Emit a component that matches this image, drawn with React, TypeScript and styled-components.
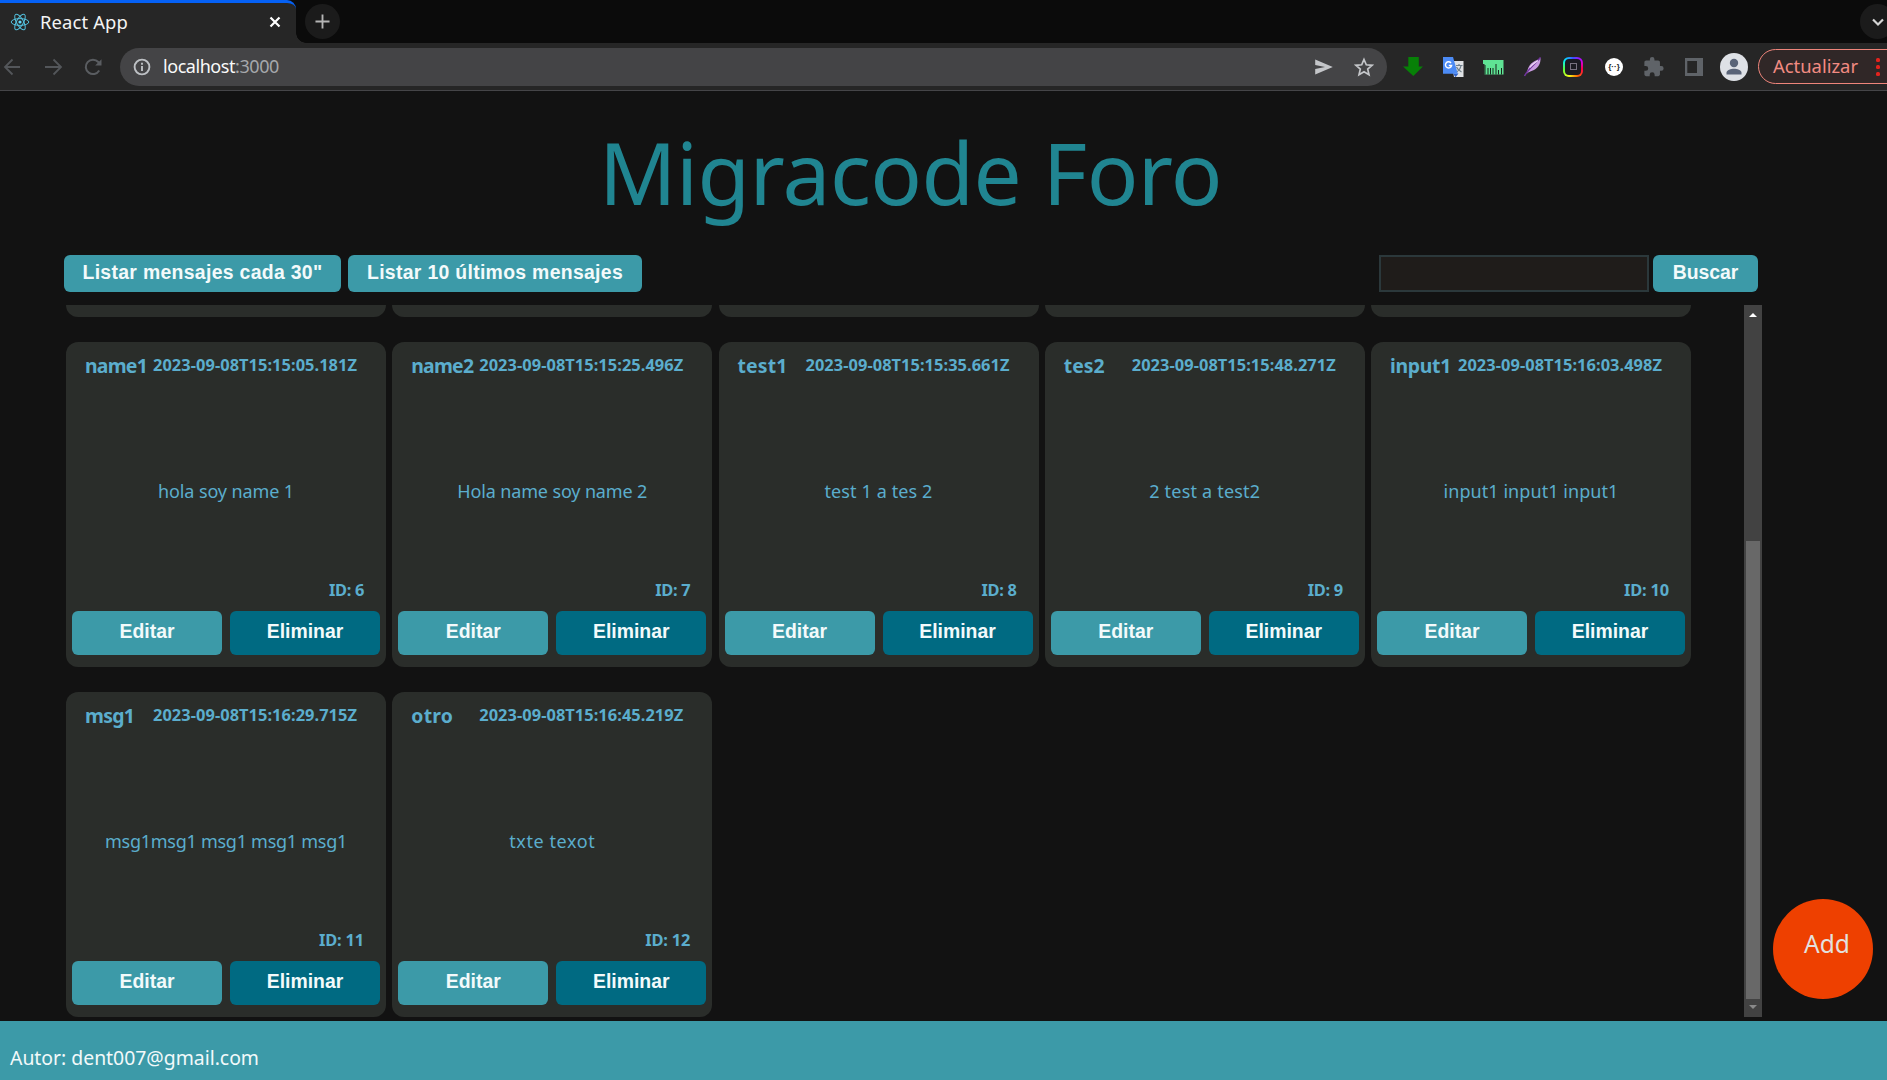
import React, { useLayoutEffect, useRef, useState } from 'react';
import styled, { createGlobalStyle, css } from 'styled-components';

const uiFont = '"Noto Sans", "Open Sans", sans-serif';
const buttonFont = '"Liberation Sans", Arial, sans-serif';

const GlobalStyle = createGlobalStyle`
  *, *::before, *::after { box-sizing: border-box; }
  html, body { margin: 0; background: #121212; overflow: hidden; }
  svg { display: block; flex: none; }
  button, input { margin: 0; font: inherit; }
`;

const Screen = styled.div`
  width: 1887px;
  height: 1080px;
  display: flex;
  flex-direction: column;
  overflow: hidden;
  font-family: ${uiFont};
  background: #121212;
`;

/* Label tracked so that it spans a given width */
const TrackedText = styled.span`
  display: inline-block;
  white-space: pre;
  flex: none;
`;

function Tracked({ text, width }: { text: string; width: number }) {
  const ref = useRef<HTMLSpanElement>(null);
  const [spacing, setSpacing] = useState(0);
  useLayoutEffect(() => {
    if (ref.current) {
      const natural = ref.current.getBoundingClientRect().width;
      setSpacing((width - natural) / text.length);
    }
  }, []);
  return (
    <TrackedText ref={ref} style={{ letterSpacing: `${spacing}px` }}>
      {text}
    </TrackedText>
  );
}

/* Browser chrome */
const TabStrip = styled.div`
  height: 43px;
  flex: none;
  display: flex;
  background: #0b0b0b;
`;

const Tab = styled.div`
  position: relative;
  width: 296px;
  height: 43px;
  display: flex;
  align-items: center;
  padding: 0 13px 3px 10px;
  background: #262626;
  border-top: 3px solid #0561f5;
  border-top-right-radius: 9px;
  color: #f4f4f4;
  font-size: 18.4px;

  &::after {
    content: '';
    position: absolute;
    left: 296px;
    bottom: 0;
    width: 10px;
    height: 10px;
    background: radial-gradient(circle at 100% 0, transparent 9.5px, #262626 10px);
  }
`;

const TabTitle = styled.span`
  flex: 1;
  margin-left: 10px;
  line-height: 24px;
`;

const RoundButton = styled.span<{ $left?: number; $right?: number }>`
  width: 35px;
  height: 35px;
  flex: none;
  margin-top: 4px;
  margin-left: ${p => p.$left ?? 0}px;
  margin-right: ${p => p.$right ?? 0}px;
  border-radius: 50%;
  background: #1b1b1b;
  display: flex;
  align-items: center;
  justify-content: center;
`;

const StripSpace = styled.div`
  flex: 1;
`;

const Toolbar = styled.div`
  height: 48px;
  flex: none;
  display: flex;
  align-items: center;
  background: #262626;
  border-bottom: 1px solid #454548;
`;

const NavButtons = styled.div`
  width: 120px;
  display: flex;
  gap: 16px;
  padding-left: 1px;
  flex: none;
`;

const AddressBar = styled.div`
  width: 1267px;
  height: 38px;
  flex: none;
  display: flex;
  align-items: center;
  padding: 0 13px;
  border-radius: 19px;
  background: #444446;
  color: #fafafa;
  font-size: 18px;
`;

const Address = styled.span`
  flex: 1;
  margin-left: 12px;
  padding-bottom: 1px;
  line-height: 24px;
`;

const Port = styled.span`
  color: #a6a8ac;
`;

const AddressIcons = styled.span`
  display: flex;
  gap: 20px;
`;

const Extensions = styled.div`
  display: flex;
  align-items: center;
  gap: 18px;
  margin-left: 16px;
  flex: none;
`;

const UpdateChip = styled.div`
  width: 150px;
  height: 35px;
  flex: none;
  display: flex;
  align-items: center;
  margin-left: 10px;
  padding-left: 14px;
  border: 1.5px solid #ee857b;
  border-radius: 18px;
  background: #302727;
  color: #f28b82;
  font-size: 18.4px;
  line-height: 24px;
`;

const ChipLabel = styled.span`
  padding-bottom: 2px;
`;

const Dots = styled.span`
  display: grid;
  gap: 3px;
  margin-left: 18px;
  i { width: 4px; height: 4px; border-radius: 1.5px; background: #e4231d; }
`;

/* Forum page */
const Title = styled.h1`
  margin: 0;
  height: 164px;
  flex: none;
  padding: 21px 0 0 599px;
  color: #208591;
  font-size: 85.5px;
  line-height: 120px;
  font-weight: 400;
`;

const Controls = styled.div`
  height: 50px;
  flex: none;
  display: flex;
  align-items: flex-start;
  padding: 0 129px 0 64px;
`;

const tone = { light: '#3c9aa8', deep: '#006a82' };

const Button = styled.button<{ $width: number; $tall?: boolean; $tone?: keyof typeof tone; $left?: number }>`
  width: ${p => p.$width}px;
  height: ${p => (p.$tall ? 44 : 37)}px;
  margin-left: ${p => p.$left ?? 0}px;
  flex: none;
  padding: 0 0 ${p => (p.$tall ? 5 : 4)}px;
  border: 0;
  border-radius: 6px;
  background: ${p => tone[p.$tone ?? 'light']};
  color: #f3fafb;
  font: 700 19.4px/24px ${buttonFont};
  text-align: center;
`;

const SearchInput = styled.input`
  width: 270px;
  height: 37px;
  margin-left: auto;
  margin-right: 4px;
  padding: 0 6px;
  border: 2px solid #2b383b;
  border-radius: 0;
  outline: 0;
  background: #1f1c1a;
  color: #eee;
`;

const Board = styled.div`
  height: 712px;
  flex: none;
  display: flex;
`;

const Viewport = styled.div`
  width: 1744px;
  height: 712px;
  flex: none;
  overflow: hidden;
  display: flex;
  flex-direction: column;
  justify-content: flex-end;
  padding-left: 66px;
`;

const CardGrid = styled.div`
  display: grid;
  grid-template-columns: repeat(5, 320px);
  grid-auto-rows: 325px;
  gap: 25px 6.25px;
  flex: none;
`;

const Card = styled.article`
  height: 325px;
  display: flex;
  flex-direction: column;
  padding: 11px 6px 12px;
  border-radius: 12px;
  background: #2a2d2a;
  color: #5badcd;
`;

const CardHead = styled.header`
  height: 26px;
  display: flex;
  align-items: center;
  padding-left: 13px;
  line-height: 26px;
  font-weight: 700;
`;

const Name = styled.span`
  width: 68px;
  flex: none;
  font-size: 19.4px;
  white-space: nowrap;
`;

const Stamp = styled.time`
  font-size: 16.4px;
  margin-top: -2px;
`;

const Body = styled.p`
  flex: 1;
  margin: 0;
  padding-top: 31px;
  display: flex;
  align-items: center;
  justify-content: center;
  font-size: 18px;
`;

const CardId = styled.div`
  height: 40px;
  padding: 6px 16px 0 0;
  text-align: right;
  font-size: 16.4px;
  line-height: 26px;
  font-weight: 700;
`;

const Actions = styled.div`
  display: flex;
  gap: 8px;
`;

const ScrollTrack = styled.div`
  width: 18px;
  height: 712px;
  flex: none;
  display: flex;
  flex-direction: column;
  align-items: center;
  background: #424242;
`;

const ScrollThumb = styled.div`
  width: 14px;
  height: 458px;
  margin-top: 220px;
  background: #686868;
`;

const ScrollArrow = styled.i<{ $down?: boolean }>`
  width: 0;
  height: 0;
  border: 4px solid transparent;
  border-top-width: 0;
  border-bottom: 4px solid #fff;
  margin-top: 8px;
  margin-bottom: 4px;
  ${p => p.$down && css`
    border-top: 4px solid #8a8a8a;
    border-bottom-width: 0;
    margin-top: 6px;
  `}
`;

const Side = styled.aside`
  flex: 1;
  display: flex;
  align-items: flex-end;
  padding: 0 0 18px 11px;
`;

const AddButton = styled.button`
  width: 100px;
  height: 100px;
  padding: 0 0 10px 8px;
  border: 0;
  border-radius: 50%;
  background: #ee4000;
  color: #e3e0df;
  font: 400 24.5px/32px ${uiFont};
`;

const Footer = styled.footer`
  margin-top: 4px;
  height: 59px;
  flex: none;
  padding: 24px 10px 0;
  background: #3c9aa8;
  color: #f2f9fa;
  font-size: 19.4px;
  line-height: 26px;
`;

type Message = { id: number; name: string; nameW: number; time: string; text: string; textW: number };

const messages: Message[] = [
  { id: 6, name: 'name1', nameW: 62, time: '2023-09-08T15:15:05.181Z', text: 'hola soy name 1', textW: 136 },
  { id: 7, name: 'name2', nameW: 62, time: '2023-09-08T15:15:25.496Z', text: 'Hola name soy name 2', textW: 190 },
  { id: 8, name: 'test1', nameW: 50, time: '2023-09-08T15:15:35.661Z', text: 'test 1 a tes 2', textW: 108 },
  { id: 9, name: 'tes2', nameW: 41, time: '2023-09-08T15:15:48.271Z', text: '2 test a test2', textW: 111 },
  { id: 10, name: 'input1', nameW: 61, time: '2023-09-08T15:16:03.498Z', text: 'input1 input1 input1', textW: 175 },
  { id: 11, name: 'msg1', nameW: 49, time: '2023-09-08T15:16:29.715Z', text: 'msg1msg1 msg1 msg1 msg1', textW: 242 },
  { id: 12, name: 'otro', nameW: 42, time: '2023-09-08T15:16:45.219Z', text: 'txte texot', textW: 86 },
];

const MessageCard = ({ m }: { m: Message }) => (
  <Card>
    <CardHead>
      <Name><Tracked text={m.name} width={m.nameW} /></Name>
      <Stamp><Tracked text={m.time} width={204} /></Stamp>
    </CardHead>
    <Body><Tracked text={m.text} width={m.textW} /></Body>
    <CardId><Tracked text={`ID: ${m.id}`} width={m.id > 9 ? 45 : 35} /></CardId>
    <Actions>
      <Button $width={150} $tall>Editar</Button>
      <Button $width={150} $tall $tone="deep">Eliminar</Button>
    </Actions>
  </Card>
);

const ReactLogo = () => (
  <svg width="20" height="20" viewBox="0 0 20 20" fill="none" stroke="#53c1de" strokeWidth="1">
    <circle cx="10" cy="10" r="1.6" fill="#61dafb" stroke="none" />
    <ellipse cx="10" cy="10" rx="8.8" ry="3.4" />
    <ellipse cx="10" cy="10" rx="8.8" ry="3.4" transform="rotate(60 10 10)" />
    <ellipse cx="10" cy="10" rx="8.8" ry="3.4" transform="rotate(120 10 10)" />
  </svg>
);

const Arrow = ({ flip }: { flip?: boolean }) => (
  <svg width="24" height="24" viewBox="0 0 24 24" fill="none" stroke="#53565a" strokeWidth="1.8">
    <path d={flip ? 'M4 12h15M12.5 4.5 20 12l-7.5 7.5' : 'M19 12H4M11.5 4.5 4 12l7.5 7.5'} />
  </svg>
);

const Reload = () => (
  <svg width="24" height="24" viewBox="0 0 24 24" fill="none" stroke="#5a5d61" strokeWidth="2">
    <path d="M18.200 15.500A7.200 7.200 0 1 1 17.300 7L19 9" />
    <path d="M20.500 4.200v6.300h-6.300z" fill="#5a5d61" stroke="none" />
  </svg>
);

const Info = () => (
  <svg width="18" height="18" viewBox="0 0 18 18" fill="none" stroke="#bdc0c4" strokeWidth="1.9">
    <circle cx="9" cy="9" r="7.4" />
    <path d="M9 8v5M9 4.800v1.900" />
  </svg>
);

const Send = () => (
  <svg width="20" height="20" viewBox="0 0 20 20">
    <path d="M1.200 2.600 18.800 10 1.200 17.400V12L11 10 1.200 8z" fill="#c4c6c9" />
  </svg>
);

const Star = () => (
  <svg width="20" height="20" viewBox="0 0 20 20">
    <path d="m10 2.500 2.300 5.300 5.700.5-4.300 3.800 1.300 5.600-5-3-5 3 1.300-5.600L2 8.300l5.700-.5z" fill="none" stroke="#c4c6c9" strokeWidth="1.7" />
  </svg>
);

const Download = () => (
  <svg width="22" height="22" viewBox="0 0 22 22">
    <path d="M5.300 1h10.500v9.500H20L10.300 20 0 10.500h5.300z" fill="#078007" />
  </svg>
);

const Translate = () => (
  <svg width="22" height="22" viewBox="0 0 22 22">
    <path d="M8 5h12.500v16h-9.500z" fill="#dfe1e4" />
    <path d="M13 9.500h6.500M16 8v1.500M18 9.500c-.5 3-2 5-4.500 6.500M13.500 11c1 2.300 3 4 5 5" stroke="#6f7f8b" strokeWidth="1.2" fill="none" />
    <path d="m10 17.500 5.500 0-3 3.800z" fill="#2f61c9" />
    <path d="M0 1h10l4.800 16.800H0z" fill="#4c8bf5" />
    <path d="M8 7A3.100 3.100 0 1 0 8.600 9.500H5.800" stroke="#fff" strokeWidth="1.4" fill="none" />
  </svg>
);

const Fringe = () => (
  <svg width="22" height="22" viewBox="0 0 22 22">
    <path d="M0 4h20.500v14.500H1.500V8H0z" fill="#5fe394" />
    <path d="M2 9v9.500M5 12v6.500M7.500 12v6.500M10 12v6.500M13 8v10.500M15.500 14v4.500M18.500 12v6.500" stroke="#18241d" strokeWidth="1" fill="none" />
  </svg>
);

const Feather = () => (
  <svg width="22" height="22" viewBox="0 0 22 22">
    <path d="M17.500 1.500c.3 6-2 10-6.500 12.500-2.500 1.300-5 1.500-7 3.500.5-6 3-9.500 7-12 2.500-1.500 5-2 6.500-4z" fill="#c99be0" />
    <path d="M1.500 20C4 14.500 10 10 17.500 1.500" stroke="#70349c" strokeWidth="1.5" fill="none" />
    <path d="M7 11.500c2-3 5-5 8-7" stroke="#f0dcf7" strokeWidth="1.3" fill="none" />
  </svg>
);

const RainbowRing = styled.span`
  width: 20px;
  height: 20px;
  margin: 0 2px 0 0;
  flex: none;
  border-radius: 6px;
  background: conic-gradient(from 0deg, #3a4dff, #c500ff, #ff0048, #ff6a00, #f0ff1c, #5cff3a, #00f0ff, #3a4dff);
  display: flex;
  align-items: center;
  justify-content: center;
`;

const RingCore = styled.span`
  width: 16px;
  height: 16px;
  border-radius: 4px;
  background: #1b1b22;
  display: flex;
  align-items: center;
  justify-content: center;

  &::before {
    content: '';
    width: 7px;
    height: 7px;
    border: 1px solid #77717f;
  }
`;

const JsonBadge = styled.span`
  width: 18px;
  height: 18px;
  margin: 0 2px;
  flex: none;
  border-radius: 50%;
  background: #fff;
  color: #222;
  display: flex;
  align-items: center;
  justify-content: center;
  font: 700 8px/18px ${buttonFont};
`;

const Puzzle = () => (
  <svg width="22" height="22" viewBox="0 0 24 24">
    <path fill="#5f6368" d="M20 11h-1.500V7c0-1.100-.9-2-2-2h-4V3.500a2.500 2.500 0 0 0-5 0V5h-4c-1.100 0-2 .9-2 2v3.800H3a2.700 2.700 0 0 1 0 5.400H1.500V20c0 1.100.9 2 2 2h3.800v-1.500a2.700 2.700 0 0 1 5.400 0V22h3.800c1.100 0 2-.9 2-2v-4H20a2.500 2.500 0 0 0 0-5z" />
  </svg>
);

const Panel = () => (
  <svg width="22" height="22" viewBox="0 0 22 22">
    <path fillRule="evenodd" fill="#5f6368" d="M2 2h18v18H2zM4.300 5v12H14V5z" />
  </svg>
);

const AvatarIcon = styled.svg`
  margin-left: -3px;
`;

const Avatar = () => (
  <AvatarIcon width="28" height="28" viewBox="0 0 28 28">
    <circle cx="14" cy="14" r="14" fill="#dee1e6" />
    <circle cx="14" cy="10" r="4.2" fill="#5a6478" />
    <path d="M6.500 21.500v-1.700c0-2.800 4.500-4 7.500-4s7.500 1.200 7.500 4v1.700z" fill="#5a6478" />
  </AvatarIcon>
);

const Stroke = ({ d, size, width = 2.2, color = '#d5d5d5' }: { d: string; size: number; width?: number; color?: string }) => (
  <svg width={size} height={size} viewBox="0 0 16 16" fill="none" stroke={color} strokeWidth={width}>
    <path d={d} />
  </svg>
);

export default function App() {
  return (
    <Screen>
      <GlobalStyle />
      <TabStrip>
        <Tab>
          <ReactLogo />
          <TabTitle><Tracked text="React App" width={88} /></TabTitle>
          <Stroke d="M3.500 3.500l9 9M12.500 3.500l-9 9" size={16} color="#fff" />
        </Tab>
        <RoundButton $left={9}><Stroke d="M8 .5v15M.5 8h15" size={15} width={2} color="#b5b5b5" /></RoundButton>
        <StripSpace />
        <RoundButton $right={-8}><Stroke d="M3 5.500l5 5 5-5" size={16} /></RoundButton>
      </TabStrip>
      <Toolbar>
        <NavButtons><Arrow /><Arrow flip /><Reload /></NavButtons>
        <AddressBar>
          <Info />
          <Address>
            <Tracked text="localhost" width={72} />
            <Port><Tracked text=":3000" width={44} /></Port>
          </Address>
          <AddressIcons><Send /><Star /></AddressIcons>
        </AddressBar>
        <Extensions>
          <Download />
          <Translate />
          <Fringe />
          <Feather />
          <RainbowRing><RingCore /></RainbowRing>
          <JsonBadge>{'{··}'}</JsonBadge>
          <Puzzle />
          <Panel />
          <Avatar />
        </Extensions>
        <UpdateChip>
          <ChipLabel><Tracked text="Actualizar" width={85} /></ChipLabel>
          <Dots><i /><i /><i /></Dots>
        </UpdateChip>
      </Toolbar>

      <Title><Tracked text="Migracode Foro" width={623} /></Title>
      <Controls>
        <Button $width={277}><Tracked text={'Listar mensajes cada 30"'} width={240} /></Button>
        <Button $width={294} $left={7}><Tracked text="Listar 10 últimos mensajes" width={256} /></Button>
        <SearchInput />
        <Button $width={105}>Buscar</Button>
      </Controls>
      <Board>
        <Viewport>
          <CardGrid>
            {[1, 2, 3, 4, 5].map(id => <Card key={id} />)}
            {messages.map(m => <MessageCard key={m.id} m={m} />)}
          </CardGrid>
        </Viewport>
        <ScrollTrack>
          <ScrollArrow />
          <ScrollThumb />
          <ScrollArrow $down />
        </ScrollTrack>
        <Side><AddButton><Tracked text="Add" width={46} /></AddButton></Side>
      </Board>
      <Footer><Tracked text="Autor: dent007@gmail.com" width={249} /></Footer>
    </Screen>
  );
}
